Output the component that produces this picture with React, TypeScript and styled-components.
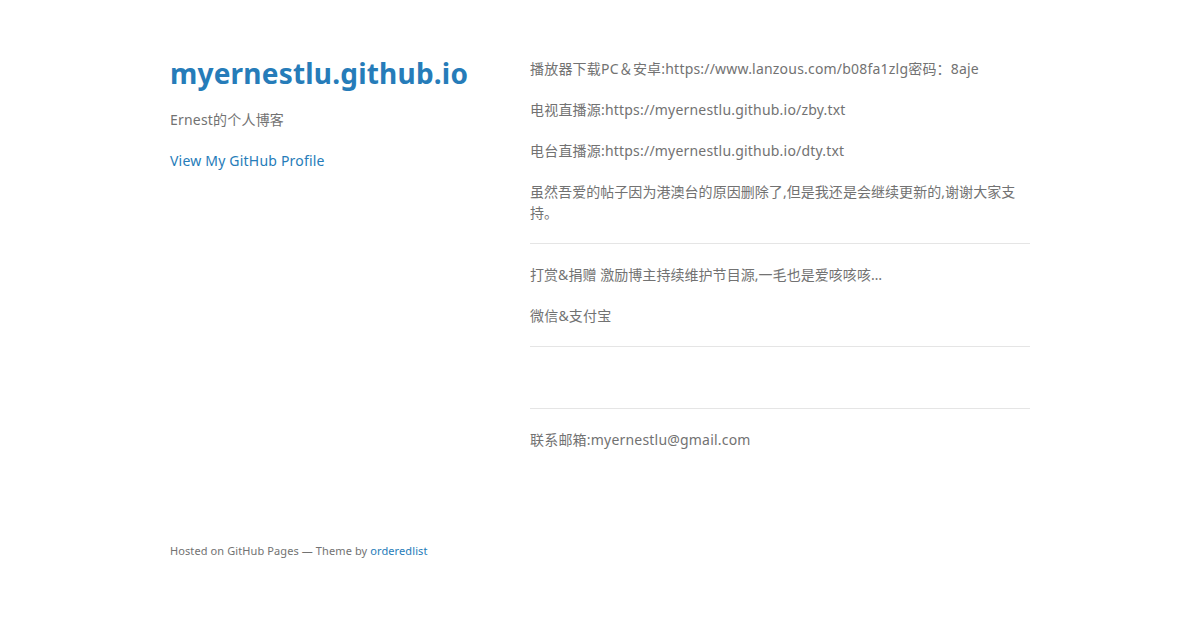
import styled, { createGlobalStyle } from 'styled-components'

const textColor = '#727272'
const linkColor = '#267CB9'

const GlobalStyle = createGlobalStyle`
  html, body {
    margin: 0;
    background: #fff;
  }

  body {
    font: 14px/1.5 "Noto Sans", "Noto Sans CJK SC", "Helvetica Neue", Helvetica, Arial, sans-serif;
    letter-spacing: 0.2px;
    color: ${textColor};
    font-weight: 400;
  }

  a {
    color: ${linkColor};
    text-decoration: none;
  }
`

const Page = styled.div`
  box-sizing: border-box;
  min-height: 630px;
  padding: 58px 50px 50px;
  display: flex;
`

const Wrapper = styled.div`
  width: 860px;
  margin: 0 auto;
  display: flex;
  justify-content: space-between;
`

const Header = styled.header`
  width: 270px;
  display: flex;
  flex-direction: column;

  h1 {
    margin: 0 0 20px;
    font-size: 28px;
    line-height: 1.1;
    font-weight: 700;
    letter-spacing: 0.2px;
    white-space: nowrap;
  }
`

const Para = styled.p<{ $cjk?: boolean }>`
  margin: 0 0 20px;
  letter-spacing: ${({ $cjk }) => ($cjk ? '0.05px' : '0.2px')};
`

const Section = styled.section`
  width: 500px;
`

const Rule = styled.hr`
  border: 0;
  background: #e5e5e5;
  height: 1px;
  margin: 0 0 20px;
`

const Blank = styled.p`
  margin: 0 0 20px;
  height: 21px;
`

const Footer = styled.footer`
  margin-top: auto;

  p {
    margin: 0 0 20px;
  }

  small {
    font-size: 11px;
    letter-spacing: 0.1px;
  }
`

const App = (): JSX.Element => {
  return (
    <>
      <GlobalStyle />
      <Page>
        <Wrapper>
          <Header>
            <h1>
              <a href='#'>myernestlu.github.io</a>
            </h1>
            <Para>Ernest的个人博客</Para>
            <Para>
              <a href='#'>View My GitHub Profile</a>
            </Para>
            <Footer>
              <p>
                <small>
                  Hosted on GitHub Pages — Theme by <a href='#'>orderedlist</a>
                </small>
              </p>
            </Footer>
          </Header>
          <Section>
            <Para>播放器下载PC＆安卓:https://www.lanzous.com/b08fa1zlg密码：8aje</Para>
            <Para>电视直播源:https://myernestlu.github.io/zby.txt</Para>
            <Para>电台直播源:https://myernestlu.github.io/dty.txt</Para>
            <Para $cjk>
              虽然吾爱的帖子因为港澳台的原因删除了,但是我还是会继续更新的,谢谢大家支持。
            </Para>
            <Rule />
            <Para $cjk>打赏&amp;捐赠 激励博主持续维护节目源,一毛也是爱咳咳咳…</Para>
            <Para>微信&amp;支付宝</Para>
            <Rule />
            <Blank />
            <Rule />
            <Para>联系邮箱:myernestlu@gmail.com</Para>
          </Section>
        </Wrapper>
      </Page>
    </>
  )
}

export default App
